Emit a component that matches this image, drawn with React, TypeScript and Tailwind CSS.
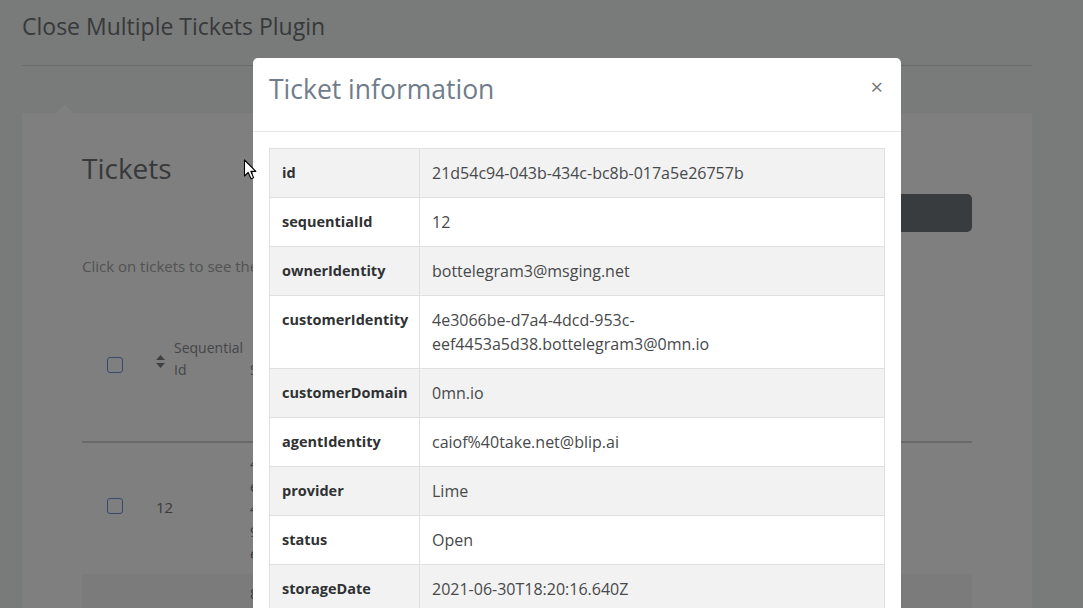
import React from "react";

const rows: { label: string; value: React.ReactNode }[] = [
  { label: "id", value: "21d54c94-043b-434c-bc8b-017a5e26757b" },
  { label: "sequentialId", value: "12" },
  { label: "ownerIdentity", value: "bottelegram3@msging.net" },
  {
    label: "customerIdentity",
    value: (
      <>
        4e3066be-d7a4-4dcd-953c-
        <br />
        eef4453a5d38.bottelegram3@0mn.io
      </>
    ),
  },
  { label: "customerDomain", value: "0mn.io" },
  { label: "agentIdentity", value: "caiof%40take.net@blip.ai" },
  { label: "provider", value: "Lime" },
  { label: "status", value: "Open" },
  { label: "storageDate", value: "2021-06-30T18:20:16.640Z" },
];

function SortIcon() {
  return (
    <svg width="9" height="13" viewBox="0 0 9 13" className="shrink-0 mt-[18px]">
      <path d="M4.5 0 L9 5 H0 Z" fill="#7c8084" />
      <path d="M4.5 13 L9 8 H0 Z" fill="#7c8084" />
    </svg>
  );
}

function Checkbox() {
  return <div className="w-4 h-4 rounded-[3px] border-[1.5px] border-[#7393d6] bg-white" />;
}

function Cursor() {
  return (
    <svg width="14" height="21" viewBox="0 0 14 21" className="absolute left-[243px] top-[159px]">
      <path d="M1.5 1 L1.5 17 L5.2 13.4 L8 19.8 L10.6 18.7 L7.8 12.4 L12.8 12.4 Z" fill="#fff" stroke="#000" strokeWidth="1.1" strokeLinejoin="round" />
    </svg>
  );
}

export default function App() {
  return (
    <div className="relative w-[1083px] h-[608px] overflow-hidden bg-[#f3f4f5] font-['Open_Sans',sans-serif]">
      {/* page underneath */}
      <div className="px-[22px] w-[1054px]">
        <header className="h-[66px] border-b border-[#d4d6d8] flex items-center">
          <h1 className="text-[23px] text-[#707274] -mt-[13px]">Close Multiple Tickets Plugin</h1>
        </header>
        <div className="relative mt-[47px] bg-white h-[520px] px-[60px] pt-[36px]">
          <div className="absolute -top-[6px] left-[37px] w-3 h-3 rotate-45 bg-white" />
          <h2 className="text-[28px] text-[#707274] leading-[38px]">Tickets</h2>
          <div className="flex justify-end mt-[7px]">
            <div className="w-[200px] h-[38px] rounded-[5px] bg-[#70797d]" />
          </div>
          <p className="mt-[24px] text-[15px] text-[#a4a6a8] leading-[20px]">Click on tickets to see the details</p>
          <div className="mt-[35px] flex items-center h-[132px] border-b-2 border-[#d0d2d4] pb-[22px] text-[14px] text-[#8a8d90]">
            <div className="w-[74px] pl-[25px]"><Checkbox /></div>
            <div className="flex items-start gap-[9px] w-[94px] leading-[22px] -mt-[12px]">
              <SortIcon />
              <span>
                Sequential
                <br />
                Id
              </span>
            </div>
            <span className="leading-[22px] mt-[10px]">Sender</span>
          </div>
          <div className="flex items-center h-[131px] pb-[6px] text-[15px] text-[#767779]">
            <div className="w-[74px] pl-[25px]"><Checkbox /></div>
            <span className="w-[94px] mt-[4px]">12</span>
            <span className="leading-[22.5px] mt-[6px]">
              4e3066be-
              <br />
              eef4453a5
              <br />
              4dcd-953c
              <br />
              953c-eef4
              <br />
              eef4453a5d
            </span>
          </div>
          <div className="flex items-start pt-[8px] h-[60px] bg-[#f7f7f8] text-[15px] text-[#767779]">
            <div className="w-[168px]" />
            <span>8a9b</span>
          </div>
        </div>
      </div>

      {/* backdrop */}
      <div className="absolute inset-0 bg-black/50" />

      {/* modal */}
      <div className="absolute left-[253px] top-[58px] w-[648px] h-[600px] bg-white rounded-[5px]">
        <div className="flex items-start justify-between h-[74px] px-[16px] border-b border-[#e4e6e8]">
          <h3 className="text-[26.5px] text-[#6f7d8b] leading-[32px] mt-[15px]">Ticket information</h3>
          <button className="text-[22px] leading-[22px] text-[#7a7a7a] pr-[2px] mt-[17px]">×</button>
        </div>
        <div className="px-[16px] pt-[16px]">
          <table className="w-full table-fixed border-collapse">
            <colgroup>
              <col className="w-[150px]" />
              <col />
            </colgroup>
            <tbody>
              {rows.map((r, i) => (
                <tr key={r.label} className={i % 2 === 0 ? "bg-[#f2f2f2]" : "bg-white"}>
                  <td className="border border-[#dee0e2] px-[12px] py-[12px] leading-[24px] align-top font-bold text-[14.5px] text-[#2f3133]">
                    {r.label}
                  </td>
                  <td className="border border-[#dee0e2] px-[12px] py-[12px] leading-[24px] align-top text-[16px] text-[#47494b]">
                    {r.value}
                  </td>
                </tr>
              ))}
            </tbody>
          </table>
        </div>
      </div>

      <Cursor />
    </div>
  );
}
